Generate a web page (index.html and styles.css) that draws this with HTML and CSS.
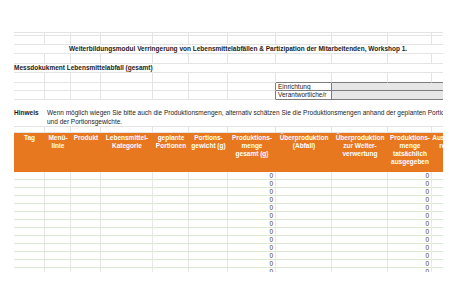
FILE: index.html
```html
<!DOCTYPE html>
<html lang="de">
<head>
<meta charset="utf-8">
<title>Messdokument Lebensmittelabfall</title>
<link rel="stylesheet" href="styles.css">
</head>
<body>
<div class="sheet">
  <div class="row r1 first">
    <div class="c"></div><div class="c"></div><div class="c"></div><div class="c"></div><div class="c"></div><div class="c"></div><div class="c"></div><div class="c"></div><div class="c"></div><div class="c"></div><div class="c"></div>
  </div>
  <div class="row r2">
    <div class="c"></div><div class="c"></div><div class="c"></div><div class="c"></div><div class="c"></div><div class="c"></div><div class="c"></div><div class="c"></div><div class="c"></div><div class="c"></div><div class="c"></div>
  </div>
  <div class="row r3">
    <div class="c span-all title">Weiterbildungsmodul Verringerung von Lebensmittelabfällen &amp; Partizipation der Mitarbeitenden, Workshop 1.</div>
  </div>
  <div class="row r4">
    <div class="c"></div><div class="c"></div><div class="c"></div><div class="c"></div><div class="c"></div><div class="c"></div><div class="c"></div><div class="c"></div><div class="c"></div><div class="c"></div><div class="c"></div>
  </div>
  <div class="row r5">
    <div class="c span-all subtitle">Messdokukment Lebensmittelabfall (gesamt)</div>
  </div>
  <div class="row r6">
    <div class="c"></div><div class="c"></div><div class="c"></div><div class="c"></div><div class="c"></div><div class="c"></div><div class="c"></div><div class="c bt"></div><div class="c bt"></div><div class="c bt"></div><div class="c bt"></div>
  </div>
  <div class="row r7">
    <div class="c"></div><div class="c"></div><div class="c"></div><div class="c"></div><div class="c"></div><div class="c"></div><div class="c bl"></div>
    <div class="c box-label">Einrichtung</div>
    <div class="c box-value"></div>
  </div>
  <div class="row r8">
    <div class="c"></div><div class="c"></div><div class="c"></div><div class="c"></div><div class="c"></div><div class="c"></div><div class="c bl"></div>
    <div class="c box-label">Verantwortliche/r</div>
    <div class="c box-value"></div>
  </div>
  <div class="row r9">
    <div class="c note-label">Hinweis</div>
    <div class="c note-text">Wenn möglich wiegen Sie bitte auch die Produktionsmengen, alternativ schätzen Sie die Produktionsmengen anhand der geplanten Portionen<br>und der Portionsgewichte.</div>
  </div>
  <div class="row r10">
    <div class="c"></div><div class="c"></div><div class="c"></div><div class="c"></div><div class="c"></div><div class="c"></div><div class="c"></div><div class="c"></div><div class="c"></div><div class="c"></div><div class="c"></div>
  </div>
  <div class="row head">
    <div class="h">Tag</div>
    <div class="h">Menü-<br>linie</div>
    <div class="h">Produkt</div>
    <div class="h">Lebensmittel-<br>Kategorie</div>
    <div class="h">geplante<br>Portionen</div>
    <div class="h">Portions-<br>gewicht (g)</div>
    <div class="h">Produktions-<br>menge<br>gesamt (g)</div>
    <div class="h">Überproduktion<br>(Abfall)</div>
    <div class="h">Überproduktion<br>zur Weiter-<br>verwertung</div>
    <div class="h">Produktions-<br>menge<br>tatsächlich<br>ausgegeben</div>
    <div class="h">Ausgabe-<br>reste</div>
  </div>
  <div class="row drow"><div class="d"></div><div class="d"></div><div class="d"></div><div class="d"></div><div class="d"></div><div class="d"></div><div class="d num">0</div><div class="d"></div><div class="d"></div><div class="d num">0</div><div class="d"></div></div>
  <div class="row drow"><div class="d"></div><div class="d"></div><div class="d"></div><div class="d"></div><div class="d"></div><div class="d"></div><div class="d num">0</div><div class="d"></div><div class="d"></div><div class="d num">0</div><div class="d"></div></div>
  <div class="row drow"><div class="d"></div><div class="d"></div><div class="d"></div><div class="d"></div><div class="d"></div><div class="d"></div><div class="d num">0</div><div class="d"></div><div class="d"></div><div class="d num">0</div><div class="d"></div></div>
  <div class="row drow"><div class="d"></div><div class="d"></div><div class="d"></div><div class="d"></div><div class="d"></div><div class="d"></div><div class="d num">0</div><div class="d"></div><div class="d"></div><div class="d num">0</div><div class="d"></div></div>
  <div class="row drow"><div class="d"></div><div class="d"></div><div class="d"></div><div class="d"></div><div class="d"></div><div class="d"></div><div class="d num">0</div><div class="d"></div><div class="d"></div><div class="d num">0</div><div class="d"></div></div>
  <div class="row drow"><div class="d"></div><div class="d"></div><div class="d"></div><div class="d"></div><div class="d"></div><div class="d"></div><div class="d num">0</div><div class="d"></div><div class="d"></div><div class="d num">0</div><div class="d"></div></div>
  <div class="row drow"><div class="d"></div><div class="d"></div><div class="d"></div><div class="d"></div><div class="d"></div><div class="d"></div><div class="d num">0</div><div class="d"></div><div class="d"></div><div class="d num">0</div><div class="d"></div></div>
  <div class="row drow"><div class="d"></div><div class="d"></div><div class="d"></div><div class="d"></div><div class="d"></div><div class="d"></div><div class="d num">0</div><div class="d"></div><div class="d"></div><div class="d num">0</div><div class="d"></div></div>
  <div class="row drow"><div class="d"></div><div class="d"></div><div class="d"></div><div class="d"></div><div class="d"></div><div class="d"></div><div class="d num">0</div><div class="d"></div><div class="d"></div><div class="d num">0</div><div class="d"></div></div>
  <div class="row drow"><div class="d"></div><div class="d"></div><div class="d"></div><div class="d"></div><div class="d"></div><div class="d"></div><div class="d num">0</div><div class="d"></div><div class="d"></div><div class="d num">0</div><div class="d"></div></div>
  <div class="row drow"><div class="d"></div><div class="d"></div><div class="d"></div><div class="d"></div><div class="d"></div><div class="d"></div><div class="d num">0</div><div class="d"></div><div class="d"></div><div class="d num">0</div><div class="d"></div></div>
  <div class="row drow"><div class="d"></div><div class="d"></div><div class="d"></div><div class="d"></div><div class="d"></div><div class="d"></div><div class="d num">0</div><div class="d"></div><div class="d"></div><div class="d num">0</div><div class="d"></div></div>
  <div class="row drow"><div class="d"></div><div class="d"></div><div class="d"></div><div class="d"></div><div class="d"></div><div class="d"></div><div class="d num">0</div><div class="d"></div><div class="d"></div><div class="d num">0</div><div class="d"></div></div>
</div>
</body>
</html>
```

FILE: styles.css
```css
html, body {
  margin: 0;
  padding: 0;
  background: #ffffff;
}
body {
  padding: 32px 0 0 14px;
  font-family: "Liberation Sans", Arial, sans-serif;
  font-size: 6.5px;
  color: #1c1c1c;
}
.sheet {
  width: 429px;
  height: 240px;
  overflow: hidden;
}
.row {
  display: grid;
  grid-template-columns: 31px 26px 30px 52px 36px 39px 48px 56px 56px 44px 30px;
  width: 448px;
  box-sizing: border-box;
}
.c {
  box-sizing: border-box;
  border-right: 1px solid #e4e4e4;
  border-bottom: 1px solid #e4e4e4;
  white-space: nowrap;
  display: flex;
  align-items: center;
  line-height: 8px;
}
.first .c { border-top: 1px solid #e4e4e4; }
.r1 { height: 4px; }
.r2 { height: 9px; }
.r3 { height: 9px; }
.r4 { height: 10px; }
.r5 { height: 9px; }
.r6 { height: 10px; }
.r7 { height: 8px; }
.r8 { height: 9px; }
.r9 { height: 27px; }
.r10 { height: 6px; }
.span-all { grid-column: 1 / -1; border-right: none; }
.title { font-weight: bold; padding-left: 55px; }
.subtitle { font-weight: bold; padding-left: 0; }
.bt { border-bottom-color: #7d7d7d; }
.bl { border-right-color: #7d7d7d; }
.box-label {
  border-right-color: #7d7d7d;
  border-bottom-color: #7d7d7d;
  padding-left: 2px;
  overflow: hidden;
}
.box-value {
  grid-column: 9 / -1;
  background: #e6e6e6;
  border-right: none;
  border-bottom-color: #7d7d7d;
}
.note-label {
  font-weight: bold;
  border-right: none;
  align-items: flex-start;
  padding-top: 8px;
  line-height: 9px;
}
.note-text {
  grid-column: 2 / -1;
  border-right: none;
  align-items: flex-start;
  padding: 8px 0 0 2px;
  line-height: 9px;
}
.head {
  height: 39px;
  background: #e8781f;
}
.h {
  color: #ffffff;
  font-weight: bold;
  text-align: center;
  line-height: 8px;
  padding-top: 1px;
  white-space: nowrap;
}
.drow { height: 8px; }
.d {
  box-sizing: border-box;
  border-right: 1px solid #e8e8e8;
  border-bottom: 1px solid #dbe8d1;
  line-height: 7px;
  color: #444444;
}
.num {
  text-align: right;
  padding-right: 2px;
}
```
